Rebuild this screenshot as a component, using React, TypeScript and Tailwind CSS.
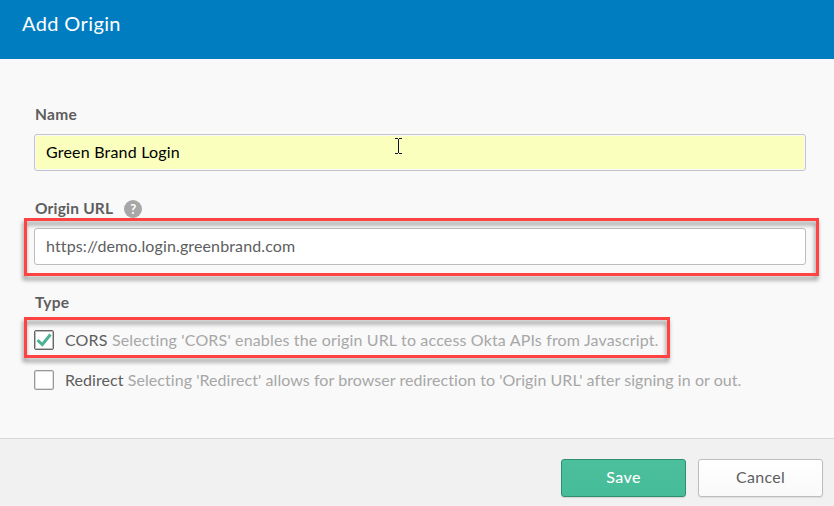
import type { ReactNode } from 'react';

function FieldLabel({ children }: { children: ReactNode }) {
  return (
    <div className="flex h-6 items-center pb-0.5 pl-px text-[15.5px] font-bold leading-[22px] text-[#5e5e5e]">{children}</div>
  );
}

function Highlight({ className }: { className: string }) {
  return (
    <div
      className={`pointer-events-none absolute border-[3px] border-[#ff4343] drop-shadow-[-1px_4px_2px_rgba(0,0,0,0.42)] ${className}`}
    />
  );
}

export default function App() {
  return (
    <div className="flex h-[506px] w-[834px] flex-col overflow-hidden bg-[#f9f9f9] font-['Lato','Open_Sans',sans-serif] text-[16px]">
      <header className="h-[59px] bg-[#007dc1] pl-[22px] pt-[9px]">
        <h1 className="text-[20px] leading-7 tracking-[0.38px] text-white">Add Origin</h1>
      </header>

      <main className="flex-1 pl-[34px] pr-7 pt-11">
        <FieldLabel>
          <span className="tracking-[0.3px]">Name</span>
        </FieldLabel>
        <div className="relative mt-[7px] flex h-[37px] items-center rounded-[3px] border border-[#c3c3c9] bg-[#f9f9f9] p-px">
          <div className="flex h-full w-full items-center bg-[#faffbd] pb-0.5 pl-2.5 text-black">
            <span className="tracking-[0.2px]">Green Brand Login</span>
          </div>
          <svg className="absolute left-[360px] top-[3px]" width="7" height="16" viewBox="0 0 7 16" shapeRendering="crispEdges">
            <path d="M0 .5H3M4 .5H7M3.5 1V15M0 15.5H3M4 15.5H7" stroke="#111133" fill="none" />
          </svg>
        </div>

        <div className="mt-[26px]">
          <FieldLabel>
            <span className="tracking-[0.2px]">Origin URL</span>
            <span className="ml-[11px] mt-0.5 flex size-[18px] items-center justify-center rounded-full bg-[#a7a7a7] text-[13px] font-bold leading-none text-white">
              ?
            </span>
          </FieldLabel>
        </div>
        <div className="relative mt-[7px]">
          <div className="flex h-[37px] items-center rounded-[3px] border border-[#bdbdbd] bg-white pb-0.5 pl-[11px] text-[#5e5e5e]">
            <span className="tracking-[0.13px]">https://demo.login.greenbrand.com</span>
          </div>
          <Highlight className="-left-2.5 -right-[13px] -top-2.5 h-[58px]" />
        </div>

        <div className="mt-[26px]">
          <FieldLabel>
            <span className="tracking-[0.3px]">Type</span>
          </FieldLabel>
        </div>
        <div className="relative mt-[15px] flex h-5 items-center whitespace-nowrap">
          <span className="flex size-5 shrink-0 items-center justify-center rounded-[2px] border border-[#666] bg-white shadow-[inset_0_0_0_1px_#bbb]">
            <svg width="16" height="14" viewBox="0 0 16 14">
              <path d="M1.5 7.2L6.3 11.5L14.5 1.5" fill="none" stroke="#4cb295" strokeWidth="3" />
            </svg>
          </span>
          <span className="ml-[11px] tracking-[0.16px] text-[#5e5e5e]">
            CORS <span className="text-[#a7a7a7]">Selecting 'CORS' enables the origin URL to access Okta APIs from Javascript.</span>
          </span>
          <Highlight className="-left-2.5 -top-[13px] h-[41px] w-[646px]" />
        </div>
        <div className="mt-5 flex h-5 items-center whitespace-nowrap">
          <span className="size-5 shrink-0 rounded-[2px] border border-[#999] bg-white shadow-[inset_0_0_0_1px_#ddd]" />
          <span className="ml-[11px] tracking-[0.06px] text-[#5e5e5e]">
            Redirect <span className="text-[#a7a7a7]">Selecting 'Redirect' allows for browser redirection to 'Origin URL' after signing in or out.</span>
          </span>
        </div>
      </main>

      <footer className="flex h-[68px] justify-end gap-3 border-t border-[#d8d8d8] bg-[#f1f1f1] pr-[11px] pt-5">
        <button className="h-[38px] w-[125px] rounded-[3px] border border-[#2f8f70] bg-linear-to-b from-[#4cbf9c] to-[#46bc98] pb-0.5 text-white shadow-[0_1px_1px_rgba(0,0,0,0.12)]">
          <span className="font-medium tracking-[0.4px]">Save</span>
        </button>
        <button className="h-[38px] w-[125px] rounded-[3px] border border-[#bdbdbd] bg-linear-to-b from-white to-[#f9f9f9] pb-0.5 text-[#5e5e5e] shadow-[0_1px_1px_rgba(0,0,0,0.08)]">
          <span className="tracking-[0.3px]">Cancel</span>
        </button>
      </footer>
    </div>
  );
}
